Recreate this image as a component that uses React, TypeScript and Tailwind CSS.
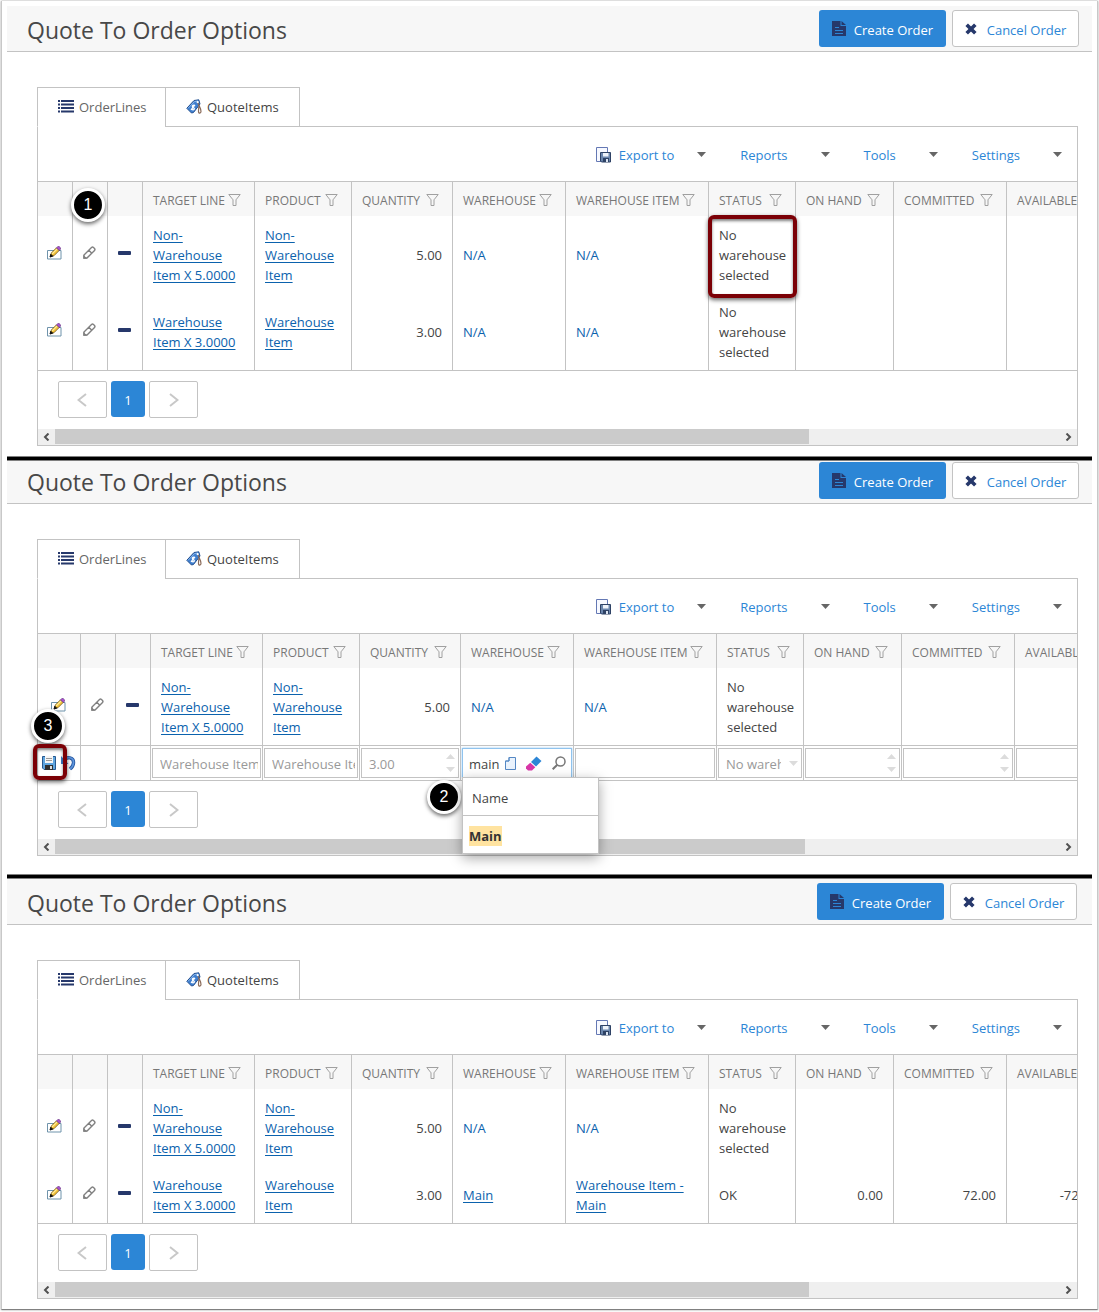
import React from 'react';

type Row = {
  line: string[];
  product: string[];
  qty: string;
  warehouse: string;
  item: string[];
  status: string[];
  onHand?: string;
  committed?: string;
  available?: string;
};

const nonWarehouse: Row = {
  line: ['Non-', 'Warehouse', 'Item X 5.0000'],
  product: ['Non-', 'Warehouse', 'Item'],
  qty: '5.00',
  warehouse: 'N/A',
  item: ['N/A'],
  status: ['No', 'warehouse', 'selected']
};
const unassigned: Row = {
  line: ['Warehouse', 'Item X 3.0000'],
  product: ['Warehouse', 'Item'],
  qty: '3.00',
  warehouse: 'N/A',
  item: ['N/A'],
  status: ['No', 'warehouse', 'selected']
};
const assigned: Row = {
  ...unassigned,
  warehouse: 'Main',
  item: ['Warehouse Item -', 'Main'],
  status: ['OK'],
  onHand: '0.00',
  committed: '72.00',
  available: '-72.00'
};

const headers = ['TARGET LINE', 'PRODUCT', 'QUANTITY', 'WAREHOUSE', 'WAREHOUSE ITEM', 'STATUS', 'ON HAND', 'COMMITTED', 'AVAILABLE'];

// Icons
const ListIcon = () => <svg width="16" height="13" viewBox="0 0 16 13" fill="#26386b">
    <path d="M0 0h2v2H0zM3 0h13v2H3zM0 3.500h2v2H0zM3 3.500h13v2H3zM0 7h2v2H0zM3 7h13v2H3zM0 10.500h2v2H0zM3 10.500h13v2H3z" />
  </svg>;
const TagIcon = () => <svg width="16" height="16" viewBox="0 0 16 16">
    <path d="M8 1.500 12.800.8 14 5 7.500 13.500 5.500 14 .8 9.300z" fill="#3f7fcf" stroke="#24508f" />
    <path d="M2 9.300 8.500 2.600l3.500-.6" fill="none" stroke="#8bb8ee" />
    <path d="M8.500 6.500c-1.300-.9-2.800.3-2 1.500.7 1.100 2 .7 1.900 1.900-.3 1.300-2 1.200-2.700.3M9 5.800l-4 5" fill="none" stroke="#fff" strokeWidth="1.200" />
    <circle cx="11.700" cy="3.200" r="1.100" fill="#fff" />
    <path d="M12 4c1 2.500 3.100 5.500 3 8.500-.1 2-2.500 2.300-2.500 0 0-2 .3-3 .3-5" fill="none" stroke="#8a6a58" strokeWidth="1.200" />
  </svg>;
const DocIcon = () => <svg width="14" height="16" viewBox="0 0 14 16">
    <path d="M0 0h8.500v5H14v10H0zM9.500 0 14 4H9.500z" fill="#26386b" />
    <path d="M3 6.500h4M3 9.500h8M3 12.500h8" stroke="#2c86d6" />
  </svg>;
const CrossIcon = () => <svg width="12" height="12" viewBox="0 0 12 12">
    <path d="m1.700 1.700 8.600 8.600M10.300 1.700 1.700 10.300" stroke="#26386b" strokeWidth="3.600" />
  </svg>;
const ExportIcon = () => <svg width="16" height="16" viewBox="0 0 16 16">
    <path d="M.5.5h11v14H.5z" fill="#f7f9ff" stroke="#6478b4" />
    <path d="M4.500 5.500h10v9.500h-9l-1-1z" fill="#6b86ad" stroke="#2e4265" />
    <path d="M7 6h5.500v3.500H7z" fill="#eef3fa" />
    <path d="M7 11h6v4H7z" fill="#2e4265" />
    <path d="M10 12h2v3h-2z" fill="#dce5f2" />
  </svg>;
const FilterIcon = () => <svg width="13" height="12" viewBox="0 0 13 12" fill="none" stroke="#a0a0a0">
    <path d="M.8.5h11.400L8 5.800V11.500H5V5.800z" />
  </svg>;
const EditIcon = () => <svg width="15" height="14" viewBox="0 0 15 14">
    <path d="M.5 4.500h13.500v8.500H.5z" fill="#fff" stroke="#6f93ab" />
    <path d="m3.300 10.700 1-3.700L9.500 1.800l2.700 2.700L7 9.700z" fill="#f3c13a" stroke="#5c4512" strokeWidth=".7" />
    <path d="m5.200 7.800 5-5" stroke="#fff0a0" strokeWidth="1.200" />
    <path d="m9.500 1.800 1.300-1.300h1.400l1.300 1.300v1.400L12.200 4.500z" fill="#a552cc" stroke="#643080" strokeWidth=".6" />
    <path d="m3 11 .8-2.700L5.700 10.200z" fill="#111" stroke="#111" />
  </svg>;
const PencilIcon = () => <svg width="13" height="13" viewBox="0 0 13 13" fill="none" stroke="#808080" strokeWidth="1.400">
    <path d="M1 12V9L8.500 1.500a1.500 1.500 0 0 1 2 0l1 1a1.500 1.500 0 0 1 0 2L4 12zM5.800 4.200l3 3" />
    <path d="M1 10.500 2.500 12H1z" fill="#808080" />
  </svg>;
const SaveIcon = () => <svg width="16" height="16" viewBox="0 0 16 16">
    <path d="M1.500 1.500h13v13H3l-1.500-1.500z" fill="#5fa5df" stroke="#28598f" />
    <path d="M4 1h8v7H4z" fill="#f5f5f5" />
    <path d="M5 3.500h6M5 5.500h6" stroke="#999" />
    <path d="M4 10h8v5H4z" fill="#303030" />
    <path d="M9 11h2v3H9z" fill="#ddd" />
  </svg>;
const UndoIcon = () => <svg width="16" height="16" viewBox="0 0 16 16" fill="none">
    <path d="M3 5.500C7 1 14 2 13.500 8c-.2 2.500-1.500 4.500-3.500 6" stroke="#2a5ba5" strokeWidth="3.400" />
    <path d="M3 5.500C7 1 14 2 13.500 8c-.2 2.500-1.500 4.500-3.500 6" stroke="#5d95dc" strokeWidth="1.600" />
    <path d="M1 1v8h7.500z" fill="#3c78c4" />
  </svg>;
const PageIcon = () => <svg width="11" height="13" viewBox="0 0 11 13">
    <path d="M4 .5h6.500v12H.5V4H4z" fill="#eaf3fd" stroke="#5588c4" />
    <path d="M4 .5V4H.5" fill="none" stroke="#5588c4" />
  </svg>;
const EraserIcon = () => <svg width="16" height="15" viewBox="0 0 16 15">
    <path d="m10.500.5 5 4.500-5.500 5.500-5-4.500z" fill="#2c86d6" />
    <path d="m4.300 6.700 5 4.500L6 14.500H2L0 12.500v-2z" fill="#d936a8" />
  </svg>;
const SearchIcon = () => <svg width="14" height="14" viewBox="0 0 14 14" fill="none" stroke="#777" strokeWidth="1.500">
    <circle cx="8.500" cy="5.500" r="4.500" />
    <path d="M5.300 8.700.7 13.300" strokeWidth="2" />
  </svg>;
const Caret = ({
  up = false
}: {
  up?: boolean;
}) => <svg width="9" height="5" viewBox="0 0 9 5" fill="currentColor">
    <path d={up ? 'M0 5h9L4.500 0z' : 'M0 0h9L4.500 5z'} />
  </svg>;
const Chevron = ({
  right = false
}: {
  right?: boolean;
}) => <svg width="10" height="14" viewBox="0 0 10 14" fill="none" stroke="#c8c8c8" strokeWidth="2">
    <path d={right ? 'm1 1 7.500 6L1 13' : 'M9 1 1.500 7 9 13'} />
  </svg>;
const ScrollArrow = ({
  right = false
}: {
  right?: boolean;
}) => <svg width="7" height="8" viewBox="0 0 7 8" fill="none" stroke="#505050" strokeWidth="2">
    <path d={right ? 'm1.500.5 3.500 3.500-3.500 3.500' : 'M5.500.5 2 4l3.500 3.500'} />
  </svg>;

const Links = ({
  lines
}: {
  lines: string[];
}) => lines[0] === 'N/A' ? <span className="text-[#0b62ad]">N/A</span> : <a href="#" className="text-[#0b62ad] underline underline-offset-2">
      {lines.map((line, i) => <span key={i} className="block whitespace-nowrap">{line}</span>)}
    </a>;

const cell = 'border-r border-[#c3c3c3] px-[10px] pt-[9px] pb-2';
const iconCell = 'border-r border-[#c3c3c3] pr-px pb-1';
const field = 'h-[30px] w-full border border-[#c3c3c3] bg-white pt-px pl-[7px] text-[#999]';

const DataRow = ({
  row
}: {
  row: Row;
}) => <tr>
    <td className={iconCell}><a href="#" aria-label="Edit" className="flex justify-center"><EditIcon /></a></td>
    <td className={iconCell}><a href="#" aria-label="Inline edit" className="flex justify-center"><PencilIcon /></a></td>
    <td className={iconCell}><a href="#" aria-label="Remove" className="flex justify-center"><span className="h-1 w-[13px] rounded-[1px] bg-[#26386b]" /></a></td>
    <td className={cell}><Links lines={row.line} /></td>
    <td className={cell}><Links lines={row.product} /></td>
    <td className={`${cell} text-right`}>{row.qty}</td>
    <td className={cell}><Links lines={[row.warehouse]} /></td>
    <td className={cell}><Links lines={row.item} /></td>
    <td className={cell}>{row.status.map(s => <span key={s} className="block">{s}</span>)}</td>
    <td className={`${cell} text-right`}>{row.onHand}</td>
    <td className={`${cell} text-right`}>{row.committed}</td>
    <td className={`${cell} text-right`}>{row.available}</td>
  </tr>;

const NumberField = ({
  label,
  value
}: {
  label: string;
  value: string;
}) => <div className="relative">
    <input aria-label={label} disabled defaultValue={value} className={field} />
    <span className="absolute inset-y-[5px] right-1 flex flex-col justify-between py-px text-[#dcdcdc]">
      <Caret up />
      <Caret />
    </span>
  </div>;

const EditRow = () => {
  const td = 'border-t border-r border-[#c3c3c3] px-px py-[2px]';
  return <tr>
      <td className={td}>
        <div className="flex gap-[3px] pl-[2px]">
          <button aria-label="Save"><SaveIcon /></button>
          <button aria-label="Undo"><UndoIcon /></button>
        </div>
      </td>
      <td className={td}></td>
      <td className={td}></td>
      <td className={td}><input aria-label="Target line" disabled defaultValue="Warehouse Item X 3.0000" className={`${field} pr-[2px]`} /></td>
      <td className={td}><input aria-label="Product" disabled defaultValue="Warehouse Item" className={`${field} pr-[2px]`} /></td>
      <td className={td}><NumberField label="Quantity" value="3.00" /></td>
      <td className={td}>
        <div className="flex h-[30px] items-center border border-[#8fc3ee] pl-[6px] shadow-[0_0_2px_#8fc3ee]">
          <input aria-label="Warehouse" defaultValue="main" className="w-[36px] min-w-0 pt-px outline-none" />
          <PageIcon />
          <span className="ml-[10px]"><EraserIcon /></span>
          <span className="ml-[10px]"><SearchIcon /></span>
        </div>
      </td>
      <td className={td}><input aria-label="Warehouse item" disabled className={field} /></td>
      <td className={td}>
        <div className="relative">
          <select aria-label="Status" disabled className={`${field} appearance-none pr-5 opacity-100`}>
            <option>No warehouse selected</option>
          </select>
          <span className="absolute top-[13px] right-1 text-[#dcdcdc]"><Caret /></span>
        </div>
      </td>
      <td className={td}><NumberField label="On hand" value="" /></td>
      <td className={td}><NumberField label="Committed" value="" /></td>
      <td className={td}><NumberField label="Available" value="" /></td>
    </tr>;
};

const Marker = ({
  n,
  className
}: {
  n: number;
  className: string;
}) => <span className={`absolute flex size-[34px] items-center justify-center rounded-full border-3 border-white bg-black font-['Liberation_Sans'] text-base text-white shadow-[0_2px_4px_rgba(0,0,0,0.6)] ${className}`}>
    {n}
  </span>;

const Highlight = ({
  className
}: {
  className: string;
}) => <span className={`absolute rounded-md border-4 border-[#7b0006] shadow-[0_2px_4px_rgba(0,0,0,0.6),inset_0_2px_3px_rgba(0,0,0,0.5)] ${className}`} />;

interface StepProps {
  rows: Row[];
  editing?: boolean;
  headerClass: string;
  thumbClass: string;
  children?: React.ReactNode;
}

const Step: React.FC<StepProps> = ({
  rows,
  editing,
  headerClass,
  thumbClass,
  children
}) => <section>
    <header className={`flex items-center justify-between border-b border-[#c3c3c3] bg-[#f7f7f7] pb-1 pl-5 ${headerClass}`}>
      <h1 className="pt-[2px] text-[23px] leading-8 text-[#484848]">Quote To Order Options</h1>
      <div className="flex gap-[6px]">
        <button className="flex h-[37px] w-[127px] items-center justify-center gap-2 rounded-[3px] bg-[#2c86d6] text-white">
          <DocIcon />
          <span className="pt-[2px]">Create Order</span>
        </button>
        <button className="flex h-[37px] w-[127px] items-center justify-center gap-[10px] rounded-[3px] border border-[#c3c3c3] bg-white text-[#2c86d6]">
          <CrossIcon />
          <span className="pt-[2px]">Cancel Order</span>
        </button>
      </div>
    </header>
    <div className="relative mt-[35px] mr-[14px] ml-[30px]">
      {/* Tabs */}
      <div className="flex h-10" role="tablist">
        <button role="tab" aria-selected="true" className="flex w-32 items-center gap-[5px] border-t border-b border-l border-[#c3c3c3] border-b-white pb-px pl-5 text-[#666]">
          <ListIcon />
          OrderLines
        </button>
        <button role="tab" aria-selected="false" className="flex w-[135px] items-center gap-[5px] border border-[#c3c3c3] pb-px pl-5">
          <TagIcon />
          QuoteItems
        </button>
        <div className="flex-1 border-b border-[#c3c3c3]"></div>
      </div>
      <div className="border-x border-b border-[#c3c3c3]">
        {/* Toolbar */}
        <div className="flex h-[54px] items-center justify-end gap-[34px] pt-[2px] pr-[15px] text-[#2c86d6]">
          <button className="flex items-center gap-[23px]">
            <span className="flex items-center gap-[7px]"><ExportIcon />Export to</span>
            <span className="pb-[2px] text-[#666]"><Caret /></span>
          </button>
          {['Reports', 'Tools', 'Settings'].map(label => <button key={label} className="flex items-center gap-[33px]">
              {label}
              <span className="pb-[2px] text-[#666]"><Caret /></span>
            </button>)}
        </div>
        {/* Grid */}
        <div className="overflow-hidden border-y border-[#c3c3c3]">
          <table className={`table-fixed border-separate border-spacing-0 ${editing ? 'w-[1078px]' : 'w-[1070px]'}`}>
            <colgroup>
              <col className={editing ? 'w-[43px]' : 'w-[35px]'} />
              <col className="w-[35px]" />
              <col className="w-[35px]" />
              <col className="w-[112px]" />
              <col className="w-[97px]" />
              <col className="w-[101px]" />
              <col className="w-[113px]" />
              <col className="w-[143px]" />
              <col className="w-[87px]" />
              <col className="w-[98px]" />
              <col className="w-[113px]" />
              <col />
            </colgroup>
            <thead>
              <tr className="h-[34px] bg-[#f7f7f7] text-xs text-[#777]">
                {[0, 1, 2].map(i => <th key={i} className="border-r border-[#c3c3c3]"></th>)}
                {headers.map(h => <th key={h} className="border-r border-[#c3c3c3] pt-[2px] pr-[13px] pl-[10px] font-normal">
                    <span className="flex items-center justify-between whitespace-nowrap">
                      <span className="pt-[2px]">{h}</span>
                      <button aria-label={`Filter ${h}`}><FilterIcon /></button>
                    </span>
                  </th>)}
              </tr>
            </thead>
            <tbody>
              {rows.map((row, i) => <DataRow key={i} row={row} />)}
              {editing && <EditRow />}
            </tbody>
          </table>
        </div>
        {/* Pager */}
        <nav className="flex gap-1 pt-[10px] pb-[11px] pl-5">
          <button aria-label="Previous page" className="flex h-[37px] w-[49px] items-center justify-center rounded-xs border border-[#c3c3c3] pr-[2px]"><Chevron /></button>
          <button className="h-9 w-[34px] rounded-[3px] bg-[#2c86d6] pt-px text-white">1</button>
          <button aria-label="Next page" className="flex h-[37px] w-[49px] items-center justify-center rounded-xs border border-[#c3c3c3]"><Chevron right /></button>
        </nav>
        {/* Horizontal scrollbar */}
        <div className="flex h-4 bg-[#efefef] pb-px">
          <button aria-label="Scroll left" className="flex w-[17px] items-center justify-center"><ScrollArrow /></button>
          <div className="flex-1">
            <div className={`h-[15px] bg-[#cbcbcb] ${thumbClass}`}></div>
          </div>
          <button aria-label="Scroll right" className="flex w-[17px] items-center justify-center"><ScrollArrow right /></button>
        </div>
      </div>
      {children}
    </div>
  </section>;

const Divider = () => <div className="h-[5px] border-y border-[#808080] bg-black"></div>;

export default function App() {
  return <div className="bg-white pt-px pr-px pb-[2px] pl-px font-['Open_Sans','Noto_Sans',sans-serif] text-[13px] leading-5 text-[#444]">
      <main className="border-x border-b border-x-[#c8c8c8] border-b-[#808080] px-[5px] pt-[5px] pb-[10px] shadow-[0_0_2px_rgba(0,0,0,0.4)]">
        <Step rows={[nonWarehouse, unassigned]} headerClass="pt-1 pr-[13px]" thumbClass="w-[75%]">
          <Marker n={1} className="top-[101px] left-[34px]" />
          <Highlight className="top-32 left-[671px] h-[83px] w-[89px]" />
        </Step>
        <div className="h-[10px]"></div>
        <Divider />
        <Step rows={[nonWarehouse]} editing headerClass="pt-px pr-[13px]" thumbClass="w-[74.6%]">
          <Marker n={3} className="top-[170px] left-[-6px]" />
          <Highlight className="top-[205px] left-[-4px] h-9 w-[34px]" />
          <Marker n={2} className="top-[241px] left-[390px]" />
          <div className="absolute top-[238px] left-[425px] w-[137px] border border-[#c3c3c3] bg-white shadow-[0_4px_12px_rgba(0,0,0,0.35)]">
            <div className="border-b border-[#c3c3c3] px-[9px] pt-[10px] pb-[7px]">Name</div>
            <div className="px-[6px] pt-[10px] pb-[7px] font-bold text-[#333]"><mark className="inline-block bg-[#ffe3a0] text-inherit">Main</mark></div>
          </div>
        </Step>
        <div className="h-[18px]"></div>
        <Divider />
        <Step rows={[nonWarehouse, assigned]} headerClass="pt-1 pr-[15px]" thumbClass="w-[75%]" />
      </main>
    </div>;
}
